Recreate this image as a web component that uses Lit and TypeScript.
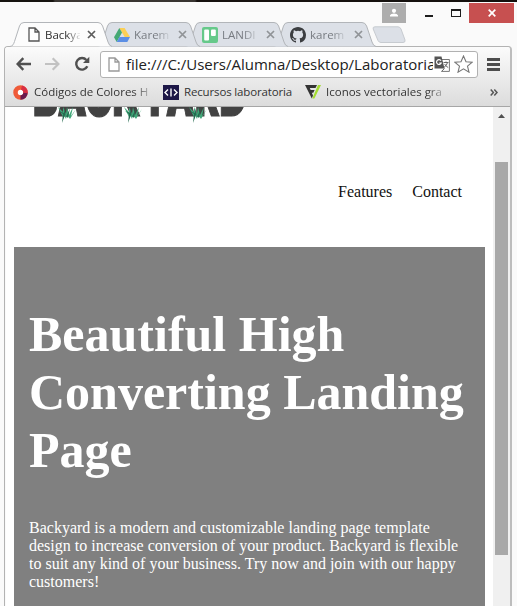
import { LitElement, html, svg, css, nothing } from "lit";
import { customElement, property } from "lit/decorators.js";

const page = (c: string) => html`<svg width="12" height="15" viewBox="0 0 12 15"><path d="M1 1H7L11 5V14H1Z M7 1V5H11" fill="#fff" stroke=${c} stroke-width="1.3"/></svg>`;
const drive = html`<svg width="16" height="14" viewBox="0 0 16 14"><path d="M5.3 0H10.6L16 9H10.7Z" fill="#fbcf55"/><path d="M5.3 0L8 4.5L2.7 14L0 9.2Z" fill="#45a874"/><path d="M5.4 9H16L13.3 14H2.7Z" fill="#5b8ee4"/></svg>`;
const trello = html`<svg width="16" height="16" viewBox="0 0 16 16"><rect width="16" height="16" rx="2" fill="#66c98a"/><rect x="2.2" y="2.5" width="4.8" height="11" rx="1" fill="#fff"/><rect x="9" y="2.5" width="4.8" height="6.5" rx="1" fill="#fff"/></svg>`;
const github = html`<svg width="16" height="16" viewBox="0 0 16 16"><path fill="#3c3e41" d="M8 0C3.58 0 0 3.58 0 8c0 3.54 2.29 6.53 5.47 7.59.4.07.55-.17.55-.38 0-.19-.01-.82-.01-1.49-2.01.37-2.53-.49-2.69-.94-.09-.23-.48-.94-.82-1.13-.28-.15-.68-.52-.01-.53.63-.01 1.08.58 1.23.82.72 1.21 1.87.87 2.33.66.07-.52.28-.87.51-1.07-1.78-.2-3.64-.89-3.64-3.95 0-.87.31-1.59.82-2.15-.08-.2-.36-1.02.08-2.12 0 0 .67-.21 2.2.82a7.5 7.5 0 0 1 4 0c1.53-1.04 2.2-.82 2.2-.82.44 1.1.16 1.92.08 2.12.51.56.82 1.27.82 2.15 0 3.07-1.87 3.75-3.65 3.95.29.25.54.73.54 1.48 0 1.07-.01 1.93-.01 2.2 0 .21.15.46.55.38A8 8 0 0 0 16 8c0-4.42-3.58-8-8-8Z"/></svg>`;

@customElement("browser-tab")
class BrowserTab extends LitElement {
  @property() label = "";
  @property({ type: Boolean, reflect: true }) active = false;
  @property({ attribute: false }) icon: unknown = nothing;

  static styles = css`
    :host { display: block; position: relative; width: 102px; height: 25px; margin-right: -14px; flex: none; }
    .shape { position: absolute; inset: 0; display: block; }
    .row { position: relative; display: grid; grid-template-columns: 16px 36px 10px; column-gap: 4px; padding: 1px 0 0 16px; align-items: center; height: 24px; box-sizing: border-box; }
    .icon { display: grid; place-items: center; height: 16px; }
    .label { font: 11.5px/16px "Open Sans", sans-serif; color: #777b81; white-space: nowrap; -webkit-mask-image: linear-gradient(90deg, #000 60%, transparent 105%); }
    .close { display: block; margin-left: 4px; }
    :host([active]) .label { color: #2e2e2e; margin: 0 2px 0 -1px; }
    :host([active]) .close { margin-left: 1px; }
  `;

  render() {
    return html`
      <svg class="shape" width="102" height="25" viewBox="0 0 102 25">
        <path d="M0 24.5C3 24 3.6 22 4.5 19.5L9.5 4Q10.5 .5 14 .5H88Q91.3 .5 92.6 4L98 20Q99.2 24 102 24.5" fill=${this.active ? "#fcfcfc" : "#dce0e7"} stroke="#b2b5b9"/>
      </svg>
      <div class="row">
        <span class="icon">${this.icon}</span>
        <span class="label">${this.label}</span>
        <svg class="close" width="9" height="9" viewBox="0 0 9 9"><path d="M1 1L8 8M8 1L1 8" stroke=${this.active ? "#5c5c5c" : "#909397"} stroke-width="1.7"/></svg>
      </div>`;
  }
}

@customElement("app-root")
class AppRoot extends LitElement {
  static styles = css`
    :host { display: block; width: 517px; height: 606px; overflow: hidden; position: relative; background: #fafafa; font-family: "Open Sans", sans-serif; }
    * { box-sizing: border-box; }
    svg { display: block; flex: none; }
    .strip { height: 2px; background: linear-gradient(90deg, #16130f 53px, #3b3733 55px, #383431 195px, #15110e 197px); }
    .title { height: 44px; display: flex; justify-content: space-between; }
    .tabs { display: flex; padding: 20px 0 0 10px; position: relative; z-index: 2; width: 380px; flex: none; }
    .t1 { z-index: 4; } .t2 { z-index: 3; } .t3 { z-index: 2; } .t4 { z-index: 1; }
    .newtab { margin: 4px 0 0 10px; }
    .controls { display: flex; padding: 1px 3px 0 0; }
    .user { width: 24px; height: 20px; background: #adadad; display: grid; place-items: center; }
    .min { width: 8px; height: 2px; background: #1d1d1d; margin: 12px 0 0 19px; }
    .max { width: 10px; height: 8px; border: 1px solid #1d1d1d; border-top-width: 2px; margin: 6px 0 0 18px; }
    .x { width: 45px; height: 20px; background: #c75050; display: grid; place-items: center; margin-left: 8px; }
    .frame { height: 562px; margin: 0 5px 0 4px; border: 1px solid #b3b3b3; border-right: 2px solid #bdbdbd; border-top-left-radius: 4px; border-top-right-radius: 4px; display: flex; flex-direction: column; background: #fafafa; }
    .toolbar { height: 60px; flex: none; background: linear-gradient(#fbfbfb, #dcdcdc); border-bottom: 1px solid #a6a6a6; border-radius: 3px 3px 0 0; }
    .nav { display: flex; align-items: center; padding: 3px 0 0 11px; height: 31px; }
    .fwd { margin-left: 14px; } .reload { margin-left: 14px; }
    .omni { margin-left: 10px; width: 378px; height: 27px; border: 1px solid #b1b1b1; border-radius: 3px; background: #fff; display: flex; align-items: center; padding-left: 7px; }
    .url { margin-left: 6px; width: 307px; overflow: hidden; white-space: nowrap; font-size: 15px; line-height: 24px; color: #222; letter-spacing: -.01px; }
    .translate { margin-left: 1px; } .star { margin-left: 4px; }
    .burger { margin-left: 9px; width: 13px; height: 13px; border: solid #4d4d4d; border-width: 3px 0; display: flex; align-items: center; }
    .burger::after { content: ""; width: 100%; height: 3px; background: #4d4d4d; }
    .marks { display: flex; align-items: center; height: 28px; padding-left: 8px; font-size: 11.5px; color: #333; white-space: nowrap; }
    .mark { line-height: 18px; }
    .m1 { margin-left: 6px; width: 116px; -webkit-mask-image: linear-gradient(90deg, #000 85%, transparent 105%); }
    .m2 { margin-left: 5px; width: 110px; letter-spacing: -.15px; }
    .m3 { margin-left: 5px; width: 118px; -webkit-mask-image: linear-gradient(90deg, #000 85%, transparent 105%); }
    .i2 { margin-left: 13px; } .i3 { margin-left: 11px; } .more { margin-left: 46px; }
    .view { flex: 1; display: flex; min-height: 0; margin-left: 1px; }
    .page { flex: 1; background: #fff; font-family: "Liberation Serif", serif; font-size: 16px; padding: 0 8px; overflow: hidden; }
    .logo { position: relative; height: 18px; margin-left: 19px; overflow: hidden; display: flex; align-items: flex-end; }
    .word { font: 900 37px/37px Inter, sans-serif; color: #424242; letter-spacing: -.2px; margin-bottom: 5px; transform: scaleY(1.5); transform-origin: 0 31px; -webkit-text-stroke: .8px #424242; }
    .grass { position: absolute; left: 0; top: 0; }
    .links { display: flex; justify-content: flex-end; gap: 20px; margin-top: 58px; padding-right: 23px; line-height: 18px; color: #111; height: 64px; }
    .hero { background: #808080; color: #fff; height: 370px; padding: 58px 15px 0; }
    h1 { font-size: 50px; line-height: 58px; margin: 0; white-space: nowrap; }
    p { margin: 40px 0 0; line-height: 18px; white-space: nowrap; }
    .scroll { width: 17px; background: #f0f0f0; padding: 7px 2px 0; display: flex; flex-direction: column; align-items: center; }
    .thumb { width: 13px; height: 393px; background: #a8a8a8; margin-top: 44px; }
  `;

  render() {
    const blades = [25, 91, 156];
    return html`
      <div class="strip"></div>
      <div class="title">
        <div class="tabs">
          <browser-tab class="t1" active label="Backya" .icon=${page("#555")}></browser-tab>
          <browser-tab class="t2" label="Karem" .icon=${drive}></browser-tab>
          <browser-tab class="t3" label="LANDI" .icon=${trello}></browser-tab>
          <browser-tab class="t4" label="karem" .icon=${github}></browser-tab>
          <svg class="newtab" width="34" height="18" viewBox="0 0 34 18"><path d="M3 .8H26Q28 .8 29 3L33 14Q33.5 16.5 31 16.5H9Q7 16.5 6 14.5L1.2 3Q.5 .8 3 .8Z" fill="#dce0e7" stroke="#c7cbd0"/></svg>
        </div>
        <div class="controls">
          <div class="user"><svg width="10" height="10" viewBox="0 0 10 10"><circle cx="5" cy="2.8" r="2.1" fill="#fff"/><path d="M1 8.5V7.2Q1.8 5.6 5 5.6T9 7.2V8.5Z" fill="#fff"/></svg></div>
          <div class="min"></div><div class="max"></div>
          <div class="x"><svg width="8" height="8" viewBox="0 0 8 8"><path d="M.7 .7L7.3 7.3M7.3 .7L.7 7.3" stroke="#fff" stroke-width="1.7"/></svg></div>
        </div>
      </div>
      <div class="frame">
        <div class="toolbar">
          <div class="nav">
            <svg width="15" height="14" viewBox="0 0 15 14"><path d="M7.3 1.2L1.6 7L7.3 12.8M2 7H15" fill="none" stroke="#505050" stroke-width="2.4"/></svg>
            <svg class="fwd" width="15" height="14" viewBox="0 0 15 14"><path d="M7.7 1.2L13.4 7L7.7 12.8M13 7H0" fill="none" stroke="#c2c2c2" stroke-width="2.2"/></svg>
            <svg class="reload" width="16" height="16" viewBox="0 0 16 16"><path d="M13.3 10.3A5.8 5.8 0 1 1 12.4 4" fill="none" stroke="#505050" stroke-width="2.4"/><path d="M15.3 .8V7H9Z" fill="#505050"/></svg>
            <div class="omni">
              ${page("#999")}
              <span class="url">file:///C:/Users/Alumna/Desktop/Laboratoria</span>
              <svg class="translate" width="16" height="16" viewBox="0 0 16 16"><path d="M7 3.5H15.4V15.4H7.5" fill="#fff" stroke="#777"/><path d="M.5 .5H7.5L10.5 12.5H.5Z" fill="#555"/><path d="M7 4.8A2.4 2.4 0 1 0 7.2 7H5.2" fill="none" stroke="#fff" stroke-width="1.2"/><path d="M9.5 6.5H14.5M12 5.5V6.5M13.5 6.5Q13 9.5 9.8 11.5M10.6 8Q12 10.5 14.2 11.5M7.5 15.4L10.5 12.5" fill="none" stroke="#666" stroke-width="1"/></svg>
              <svg class="star" width="19" height="18" viewBox="0 0 19 18"><path d="M9.5 1L12 6.8L18.2 7.2L13.5 11.2L15 17.2L9.5 13.9L4 17.2L5.5 11.2L.8 7.2L7 6.8Z" fill="#fff" stroke="#777" stroke-width="1.1"/></svg>
            </div>
            <div class="burger"></div>
          </div>
          <div class="marks">
            <svg width="15" height="15" viewBox="0 0 15 15"><circle cx="7.5" cy="7.5" r="5" fill="#fff" stroke="#ef5b39" stroke-width="4.5"/><path d="M12.5 7.5A5 5 0 0 1 7.5 12.5" fill="none" stroke="#6b1b4d" stroke-width="4.5"/><path d="M8.5 2.6A5 5 0 0 1 12.5 8" fill="none" stroke="#d92e43" stroke-width="4.5"/></svg>
            <span class="mark m1">Códigos de Colores H</span>
            <svg class="i2" width="16" height="15" viewBox="0 0 16 15"><rect width="16" height="15" fill="#1d1747"/><path d="M5 4.5L2 7.5L5 10.5M11 4.5L14 7.5L11 10.5M8 3.5V11.5" fill="none" stroke="#fff" stroke-width="1.4"/></svg>
            <span class="mark m2">Recursos laboratoria</span>
            <svg class="i3" width="16" height="14" viewBox="0 0 16 14"><path d="M0 0H12L10.5 3H4.8L5.7 5H9.6L8.3 7.8H6.8L8 10.5L6.8 13.5Z" fill="#333"/><path d="M13 0H16L9.4 13.5H7.3Z" fill="#a4dc32"/></svg>
            <span class="mark m3">Iconos vectoriales gra</span>
            <svg class="more" width="8" height="7" viewBox="0 0 8 7"><path d="M.7 .5L3.4 3.5L.7 6.5M4.3 .5L7 3.5L4.3 6.5" fill="none" stroke="#555" stroke-width="1.5"/></svg>
          </div>
        </div>
        <div class="view">
          <div class="page">
            <div class="logo">
              <span class="word">BACKYARD</span>
              <svg class="grass" width="214" height="18" viewBox="0 0 214 18">
                ${blades.map((x) => svg`<g transform="translate(${x} 0)"><path d="M6 12L0 0L5 5V0L8 7L9 0L11 8L15 0L13 9L18 2L12 12L9 8L8 12L6 8Z" fill="#41a879"/><path d="M4 16L5 7L1 4L6 6L6 1L8 10L12 1L10 11L7 8Z" fill="#246b50"/></g>`)}
              </svg>
            </div>
            <nav class="links"><span>Features</span><span>Contact</span></nav>
            <section class="hero">
              <h1>Beautiful High<br />Converting Landing<br />Page</h1>
              <p>Backyard is a modern and customizable landing page template<br />design to increase conversion of your product. Backyard is flexible<br />to suit any kind of your business. Try now and join with our happy<br />customers!</p>
            </section>
          </div>
          <div class="scroll">
            <svg width="7" height="4" viewBox="0 0 7 4"><path d="M0 4L3.5 0L7 4Z" fill="#505050"/></svg>
            <div class="thumb"></div>
          </div>
        </div>
      </div>`;
  }
}
